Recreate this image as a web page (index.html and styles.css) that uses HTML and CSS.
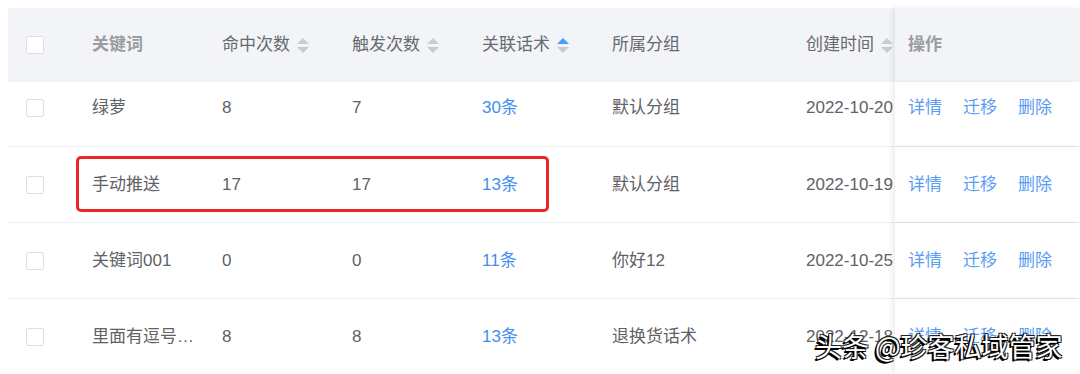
FILE: index.html
```html
<!DOCTYPE html>
<html lang="zh">
<head>
<meta charset="utf-8">
<link rel="stylesheet" href="styles.css">
</head>
<body>
<div class="table">
  <div class="row head">
    <div class="cell chk"><span class="box"></span></div>
    <div class="cell"><span class="th-bold">关键词</span></div>
    <div class="cell">命中次数<span class="sort"><i class="up"></i><i class="down"></i></span></div>
    <div class="cell">触发次数<span class="sort"><i class="up"></i><i class="down"></i></span></div>
    <div class="cell">关联话术<span class="sort"><i class="up on"></i><i class="down"></i></span></div>
    <div class="cell">所属分组</div>
    <div class="cell">创建时间<span class="sort"><i class="up"></i><i class="down"></i></span></div>
    <div class="cell ops"><span class="th-bold">操作</span></div>
  </div>
  <div class="row first">
    <div class="cell chk"><span class="box"></span></div>
    <div class="cell">绿萝</div>
    <div class="cell">8</div>
    <div class="cell">7</div>
    <div class="cell link">30条</div>
    <div class="cell">默认分组</div>
    <div class="cell">2022-10-20</div>
    <div class="cell ops"><a>详情</a><a>迁移</a><a>删除</a></div>
  </div>
  <div class="row">
    <div class="cell chk"><span class="box"></span></div>
    <div class="cell">手动推送</div>
    <div class="cell">17</div>
    <div class="cell">17</div>
    <div class="cell link">13条</div>
    <div class="cell">默认分组</div>
    <div class="cell">2022-10-19</div>
    <div class="cell ops"><a>详情</a><a>迁移</a><a>删除</a></div>
  </div>
  <div class="row">
    <div class="cell chk"><span class="box"></span></div>
    <div class="cell">关键词001</div>
    <div class="cell">0</div>
    <div class="cell">0</div>
    <div class="cell link">11条</div>
    <div class="cell">你好12</div>
    <div class="cell">2022-10-25</div>
    <div class="cell ops"><a>详情</a><a>迁移</a><a>删除</a></div>
  </div>
  <div class="row">
    <div class="cell chk"><span class="box"></span></div>
    <div class="cell">里面有逗号…</div>
    <div class="cell">8</div>
    <div class="cell">8</div>
    <div class="cell link">13条</div>
    <div class="cell">退换货话术</div>
    <div class="cell">2022-12-18</div>
    <div class="cell ops"><a>详情</a><a>迁移</a><a>删除</a></div>
  </div>
  <div class="highlight"></div>
</div>
<div class="watermark">头条 @珍客私域管家</div>
</body>
</html>
```
FILE: styles.css
```css
html, body {
  margin: 0;
  padding: 0;
  background: #fff;
  overflow: hidden;
}
body {
  width: 1080px;
  height: 374px;
  position: relative;
  padding: 8px 0 0 8px;
  box-sizing: border-box;
  font-family: "Liberation Sans", "Noto Sans CJK SC", sans-serif;
  font-size: 17px;
  color: #606266;
}
.table {
  position: relative;
  width: 1072px;
}
.row {
  display: grid;
  grid-template-columns: 66px 130px 130px 130px 130px 194px 107px 1fr;
  height: 76px;
  border-bottom: 1px solid #ebeef5;
  box-sizing: border-box;
}
.row.head {
  height: 74px;
  background: #f3f4f7;
  border-bottom: none;
}
.row.first {
  height: 65px;
}
.row.first .cell {
  padding-bottom: 13px;
}
.cell {
  display: flex;
  align-items: center;
  padding-left: 18px;
  line-height: 24px;
  white-space: nowrap;
  overflow: hidden;
  box-sizing: border-box;
}
.head .cell {
  color: #666a70;
}
.th-bold {
  font-weight: bold;
  color: #9a9ca1;
}
.cell.ops {
  padding-left: 13px;
  position: relative;
  overflow: visible;
  box-shadow: -3px 0 5px rgba(0, 0, 0, 0.07);
  background: #fff;
}
.head .cell.ops {
  background: #f3f4f7;
}
.ops a {
  color: #5a9cf2;
  margin-right: 21px;
}
.link {
  color: #3f8ff0;
}
.box {
  display: block;
  width: 18px;
  height: 18px;
  border: 1px solid #dcdfe6;
  border-radius: 2px;
  background: #fff;
  box-sizing: border-box;
}
.sort {
  display: inline-flex;
  flex-direction: column;
  gap: 3px;
  margin-left: 7px;
}
.sort i {
  display: block;
  width: 0;
  height: 0;
  border-left: 6px solid transparent;
  border-right: 6px solid transparent;
}
.sort .up {
  border-bottom: 6px solid #c8cacf;
}
.sort .down {
  border-top: 6px solid #c8cacf;
}
.sort .up.on {
  border-bottom-color: #409eff;
}
.highlight {
  position: absolute;
  left: 68px;
  top: 148px;
  width: 473px;
  height: 56px;
  border: 3px solid #e8272b;
  border-radius: 5px;
  box-sizing: border-box;
}
.watermark {
  position: absolute;
  left: 815px;
  top: 330px;
  font-family: "Noto Sans CJK SC", sans-serif;
  font-size: 27px;
  color: #fff;
  line-height: 1.2;
  text-shadow: -1px 1px 0 #000, -2px 2px 0 #000, 1px -1px 0 #222, -1px -1px 0 #222, 1px 1px 0 #222;
}
```
